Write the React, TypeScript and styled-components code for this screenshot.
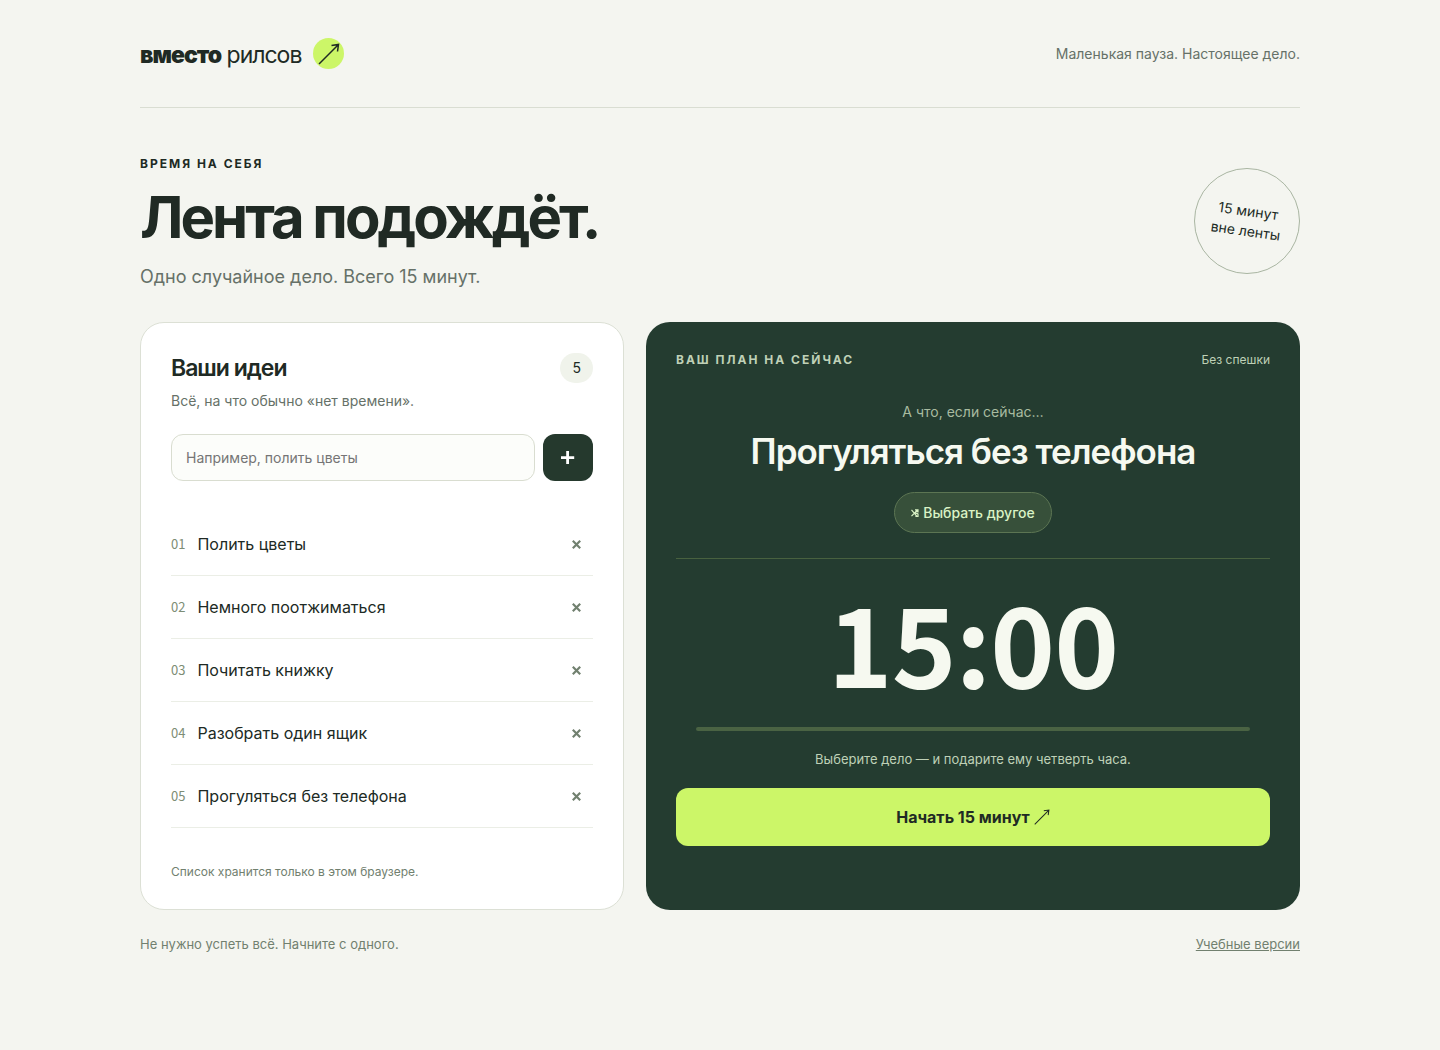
import React, { useState } from "react";
import styled, { createGlobalStyle } from "styled-components";

const GlobalStyle = createGlobalStyle`
  *, *::before, *::after { box-sizing: border-box; }
  body {
    margin: 0;
    background: #f4f5f0;
    color: #202a24;
    font-family: Inter, "Noto Sans", sans-serif;
    font-size: 16px;
    line-height: 24px;
  }
  button, input { font: inherit; }
  button { cursor: pointer; }
  h1, h2, p, ol { margin: 0; padding: 0; }
`;

const Page = styled.div`
  max-width: 1208px;
  margin: 0 auto;
  padding: 0 24px 80px;
`;

const Header = styled.header`
  display: flex;
  align-items: center;
  justify-content: space-between;
  min-height: 108px;
  border-bottom: 1px solid #d9ddd2;
`;

const Brand = styled.a`
  display: flex;
  align-items: flex-end;
  gap: 12px;
  color: inherit;
  font-size: 23px;
  letter-spacing: -1px;
  line-height: 28px;
  text-decoration: none;
`;

const BrandBold = styled.b`
  font-weight: 900;
`;

const BrandMark = styled.span`
  display: flex;
  align-items: center;
  justify-content: center;
  width: 31px;
  height: 31px;
  border-radius: 50%;
  background: #ccf668;
`;

const Tagline = styled.p`
  color: #667168;
  font-size: 14px;
`;

const Hero = styled.section`
  display: flex;
  align-items: center;
  justify-content: space-between;
  padding: 44px 0 33px;
`;

const Eyebrow = styled.p<{ $tone?: string }>`
  color: ${(p) => p.$tone ?? "inherit"};
  font-size: 12px;
  font-weight: 700;
  letter-spacing: 2px;
  text-transform: uppercase;
`;

const Title = styled.h1`
  margin-top: 9px;
  font-size: 58px;
  font-weight: 700;
  letter-spacing: -3px;
  line-height: 64px;
`;

const Lead = styled.p`
  margin-top: 16px;
  color: #667168;
  font-size: 18px;
  line-height: 24px;
`;

const Stamp = styled.div`
  display: flex;
  flex-shrink: 0;
  align-items: center;
  justify-content: center;
  width: 106px;
  height: 106px;
  border: 1px solid #a9b5a2;
  border-radius: 50%;
  font-size: 14px;
  line-height: 20px;
  text-align: center;
`;

const StampText = styled.span`
  transform: rotate(8deg);
`;

const Columns = styled.main`
  display: grid;
  grid-template-columns: 0.74fr 1fr;
  gap: 22px;
  @media (max-width: 860px) { grid-template-columns: 1fr; }
`;

const IdeasCard = styled.section`
  padding: 30px 30px 25px;
  border: 1px solid #dce0d5;
  border-radius: 24px;
  background: #fff;
`;

const CardHead = styled.div`
  display: flex;
  align-items: center;
  justify-content: space-between;
`;

const CardTitle = styled.h2`
  font-size: 23px;
  font-weight: 600;
  letter-spacing: -1px;
  line-height: 30px;
`;

const Count = styled.span`
  padding: 3px 12px;
  border-radius: 16px;
  background: #f0f3eb;
  font-size: 14px;
`;

const CardNote = styled.p`
  margin-top: 6px;
  color: #667168;
  font-size: 14px;
`;

const AddForm = styled.form`
  display: flex;
  gap: 8px;
  margin: 21px 0 32px;
`;

const IdeaInput = styled.input`
  flex: 1;
  min-width: 0;
  height: 47px;
  padding: 0 14px;
  border: 1px solid #d9ddd0;
  border-radius: 12px;
  background: #fcfdfa;
  font-size: 14px;
  &::placeholder { color: #757575; }
`;

const AddButton = styled.button`
  display: flex;
  align-items: center;
  justify-content: center;
  width: 50px;
  border: 0;
  border-radius: 12px;
  background: #25392d;
`;

const IdeaList = styled.ol`
  list-style: none;
`;

const IdeaRow = styled.li`
  display: flex;
  align-items: center;
  gap: 12px;
  height: 63px;
  border-bottom: 1px solid #ebeee6;
`;

const IdeaNumber = styled.span`
  color: #7d8d75;
  font-family: "Noto Sans CJK JP", Inter, sans-serif;
  font-size: 13px;
`;

const IdeaText = styled.span`
  flex: 1;
`;

const RemoveButton = styled.button`
  display: flex;
  align-items: center;
  justify-content: center;
  width: 32px;
  height: 32px;
  padding: 0;
  border: 0;
  background: none;
`;

const StorageNote = styled.p`
  margin-top: 32px;
  color: #71806f;
  font-size: 12px;
`;

const PlanCard = styled.section`
  display: flex;
  flex-direction: column;
  padding: 26px 30px 30px;
  border-radius: 24px;
  background: #243c30;
  color: #f6f9f0;
  text-align: center;
`;

const Calm = styled.span`
  color: #bfd1b7;
  font-size: 12px;
`;

const Prompt = styled.p`
  margin-top: 28px;
  color: #a8bba0;
  font-size: 14px;
`;

const Activity = styled.h2`
  margin-top: 5px;
  font-size: 35px;
  font-weight: 600;
  letter-spacing: -1px;
  line-height: 44px;
`;

const AnotherButton = styled.button`
  display: flex;
  align-items: center;
  gap: 4px;
  align-self: center;
  height: 41px;
  margin-top: 19px;
  padding: 0 16px;
  border: 1px solid #5c7553;
  border-radius: 21px;
  background: #37503a;
  color: #daf3c5;
  font-size: 14px;
  font-weight: 500;
`;

const Divider = styled.hr`
  width: 100%;
  height: 1px;
  margin: 25px 0 0;
  border: 0;
  background: #48613f;
`;

const Clock = styled.div`
  margin-top: 26px;
  font-family: "Noto Sans CJK JP", Inter, sans-serif;
  font-size: 110px;
  font-weight: 700;
  letter-spacing: -1px;
  line-height: 110px;
`;

const Track = styled.div`
  height: 4px;
  margin: 32px 20px 0;
  border-radius: 2px;
  background: #4a6343;
`;

const TrackFill = styled.div`
  height: 100%;
  border-radius: 2px;
  background: #ccf668;
`;

const Hint = styled.p`
  margin-top: 16px;
  color: #bfd1b7;
  font-size: 13px;
`;

const StartButton = styled.button`
  display: flex;
  align-items: center;
  justify-content: center;
  gap: 4px;
  height: 58px;
  margin-top: 17px;
  border: 0;
  border-radius: 12px;
  background: #ccf668;
  color: #202a24;
  font-size: 16px;
  font-weight: 700;
`;

const Footer = styled.footer`
  display: flex;
  justify-content: space-between;
  margin-top: 22px;
  color: #71806f;
  font-size: 13px;
`;

const FooterLink = styled.a`
  color: inherit;
  text-decoration: underline;
`;

const ArrowIcon = ({ size, stroke }: { size: number; stroke: number }) => (
  <svg width={size} height={size} viewBox="0 0 22 22" fill="none" stroke="#202a24" strokeWidth={stroke} aria-hidden="true">
    <path d="M1 21 L20.5 1.5 M13.5 2.5 L20.5 1.5 L19.5 8.5" />
  </svg>
);

const PlusIcon = () => (
  <svg width="14" height="14" viewBox="0 0 14 14" stroke="#fff" strokeWidth="2.8" aria-hidden="true">
    <path d="M6.6 0v13M0 6.6h13.2" />
  </svg>
);

const CrossIcon = () => (
  <svg width="9" height="9" viewBox="0 0 9 9" stroke="#71806f" strokeWidth="2.2" aria-hidden="true">
    <path d="M.8 .8l7.4 7.4M8.2 .8L.8 8.2" />
  </svg>
);

const ShuffleIcon = () => (
  <svg width="8" height="8" viewBox="0 0 8 8" fill="none" stroke="#daf3c5" strokeWidth="1.2" aria-hidden="true">
    <path d="M.5 .8L5.8 7.2M.5 7.2L6.5 1M4 .8h3v2.6M7 4.6v2.8H4.4M3.8 3.8L6.8 4.6" />
  </svg>
);

const initialIdeas = [
  "Полить цветы",
  "Немного поотжиматься",
  "Почитать книжку",
  "Разобрать один ящик",
  "Прогуляться без телефона",
];

export default function App() {
  const [ideas, setIdeas] = useState(initialIdeas);
  const [draft, setDraft] = useState("");
  const [chosen, setChosen] = useState(initialIdeas[4]);
  const progress = 0;

  const addIdea = (event: React.FormEvent) => {
    event.preventDefault();
    if (draft.trim()) {
      setIdeas([...ideas, draft.trim()]);
      setDraft("");
    }
  };

  const chooseAnother = () => {
    const others = ideas.filter((idea) => idea !== chosen);
    if (others.length) setChosen(others[Math.floor(Math.random() * others.length)]);
  };

  return (
    <>
      <GlobalStyle />
      <Page>
        <Header>
          <Brand href="#">
            <span><BrandBold>вместо</BrandBold> рилсов</span>
            <BrandMark><ArrowIcon size={22} stroke={1.5} /></BrandMark>
          </Brand>
          <Tagline>Маленькая пауза. Настоящее дело.</Tagline>
        </Header>

        <Hero>
          <div>
            <Eyebrow>Время на себя</Eyebrow>
            <Title>Лента подождёт.</Title>
            <Lead>Одно случайное дело. Всего 15 минут.</Lead>
          </div>
          <Stamp><StampText>15 минут<br />вне ленты</StampText></Stamp>
        </Hero>

        <Columns>
          <IdeasCard>
            <CardHead>
              <CardTitle>Ваши идеи</CardTitle>
              <Count>{ideas.length}</Count>
            </CardHead>
            <CardNote>Всё, на что обычно «нет времени».</CardNote>
            <AddForm onSubmit={addIdea}>
              <IdeaInput
                aria-label="Новая идея"
                placeholder="Например, полить цветы"
                value={draft}
                onChange={(event) => setDraft(event.target.value)}
              />
              <AddButton type="submit" aria-label="Добавить"><PlusIcon /></AddButton>
            </AddForm>
            <IdeaList>
              {ideas.map((idea, index) => (
                <IdeaRow key={idea}>
                  <IdeaNumber>{String(index + 1).padStart(2, "0")}</IdeaNumber>
                  <IdeaText>{idea}</IdeaText>
                  <RemoveButton
                    type="button"
                    aria-label={`Удалить: ${idea}`}
                    onClick={() => setIdeas(ideas.filter((item) => item !== idea))}
                  >
                    <CrossIcon />
                  </RemoveButton>
                </IdeaRow>
              ))}
            </IdeaList>
            <StorageNote>Список хранится только в этом браузере.</StorageNote>
          </IdeasCard>

          <PlanCard>
            <CardHead>
              <Eyebrow $tone="#bfd1b7">Ваш план на сейчас</Eyebrow>
              <Calm>Без спешки</Calm>
            </CardHead>
            <Prompt>А что, если сейчас…</Prompt>
            <Activity>{chosen}</Activity>
            <AnotherButton type="button" onClick={chooseAnother}>
              <ShuffleIcon />Выбрать другое
            </AnotherButton>
            <Divider />
            <Clock>15:00</Clock>
            <Track><TrackFill style={{ width: `${progress}%` }} /></Track>
            <Hint>Выберите дело — и подарите ему четверть часа.</Hint>
            <StartButton type="button">
              Начать 15 минут<ArrowIcon size={16} stroke={1.4} />
            </StartButton>
          </PlanCard>
        </Columns>

        <Footer>
          <span>Не нужно успеть всё. Начните с одного.</span>
          <FooterLink href="#">Учебные версии</FooterLink>
        </Footer>
      </Page>
    </>
  );
}
